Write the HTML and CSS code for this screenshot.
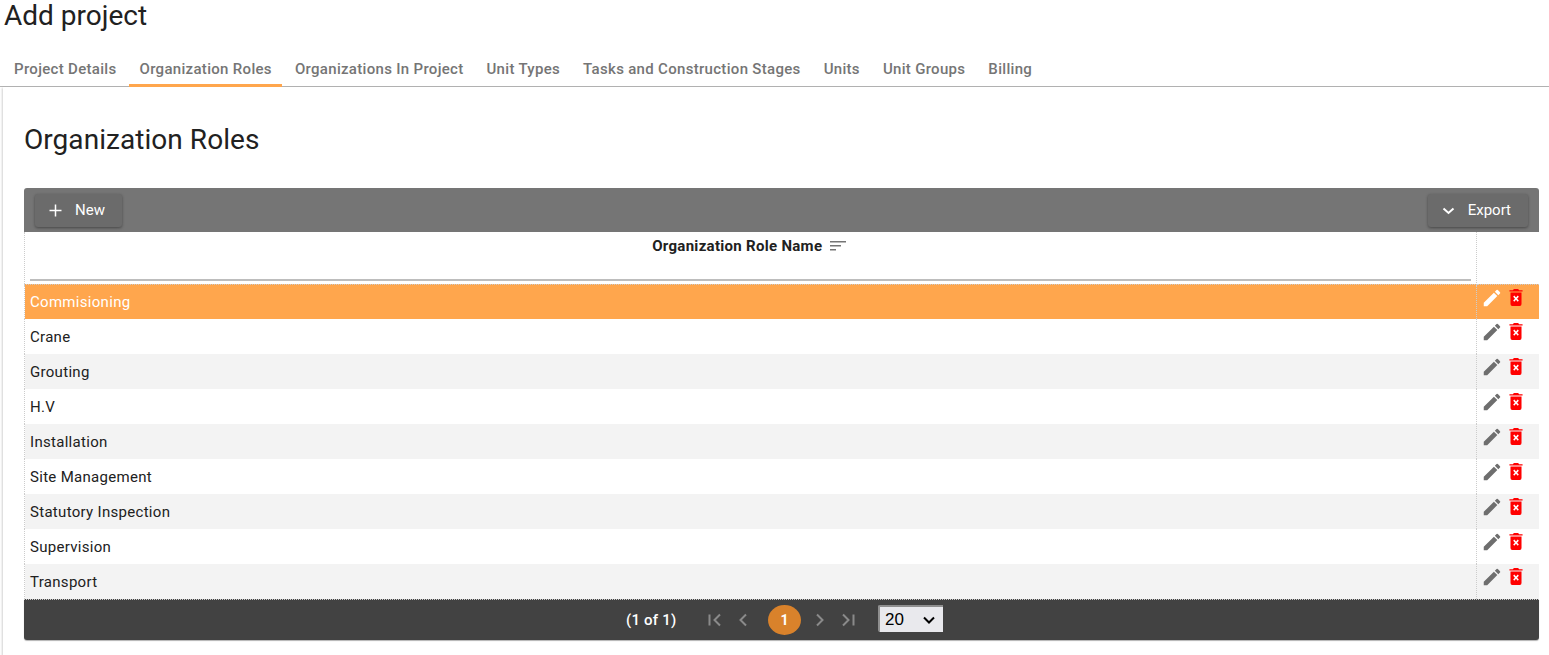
FILE: index.html
```html
<!DOCTYPE html>
<html lang="en">
<head>
<meta charset="utf-8">
<title>Add project</title>
<link rel="stylesheet" href="styles.css">
</head>
<body>
<svg class="sprite" width="0" height="0" aria-hidden="true">
  <symbol id="pencil" viewBox="0 0 24 24"><path d="M3 17.25V21h3.75L17.81 9.94l-3.75-3.75L3 17.25zM20.71 7.04a1 1 0 0 0 0-1.41l-2.34-2.34a1 1 0 0 0-1.41 0l-1.83 1.83 3.75 3.75 1.83-1.83z"/></symbol>
  <symbol id="trash" viewBox="0 0 16 18" preserveAspectRatio="none"><path fill="#f00" d="M5.500 0h5l1 1.200H15.500v1.500H.5V1.200h4zM1.700 3.600h12.600V16a2 2 0 0 1-2 2H3.700a2 2 0 0 1-2-2z"/><path class="x" d="M4.800 8.200l1.200-1.200 2 2 2-2 1.200 1.200-2 2 2 2-1.200 1.200-2-2-2 2-1.200-1.200 2-2z"/></symbol>
</svg>
<h1 class="page-title">Add project</h1>
<nav class="tabs">
  <a class="tab">Project Details</a>
  <a class="tab active">Organization Roles</a>
  <a class="tab">Organizations In Project</a>
  <a class="tab">Unit Types</a>
  <a class="tab">Tasks and Construction Stages</a>
  <a class="tab">Units</a>
  <a class="tab">Unit Groups</a>
  <a class="tab">Billing</a>
</nav>
<main class="panel">
  <h2 class="section-title">Organization Roles</h2>
  <section class="grid">
    <div class="toolbar">
      <button class="btn"><svg class="btn-icon" viewBox="0 0 14 14"><path d="M6.500 .5v12M.5 6.500h12"/></svg>New</button>
      <button class="btn"><svg class="btn-icon chev" viewBox="0 0 14 14"><path d="M1.500 4.500l5 4.500 5-4.500"/></svg>Export</button>
    </div>
    <table class="roles">
      <thead>
        <tr>
          <th class="name-head">
            <div class="head-label"><span>Organization Role Name</span><svg class="sort" viewBox="0 0 16 10"><path d="M0 .75h16M0 4.750h11M0 8.750h6"/></svg></div>
            <div class="filter"></div>
          </th>
          <th class="act-head"></th>
        </tr>
      </thead>
      <tbody>
        <tr class="selected"><td class="name">Commisioning</td><td class="acts"><svg class="pencil"><use href="#pencil"/></svg><svg class="trash"><use href="#trash"/></svg></td></tr>
        <tr><td class="name">Crane</td><td class="acts"><svg class="pencil"><use href="#pencil"/></svg><svg class="trash"><use href="#trash"/></svg></td></tr>
        <tr class="odd"><td class="name">Grouting</td><td class="acts"><svg class="pencil"><use href="#pencil"/></svg><svg class="trash"><use href="#trash"/></svg></td></tr>
        <tr><td class="name">H.V</td><td class="acts"><svg class="pencil"><use href="#pencil"/></svg><svg class="trash"><use href="#trash"/></svg></td></tr>
        <tr class="odd"><td class="name">Installation</td><td class="acts"><svg class="pencil"><use href="#pencil"/></svg><svg class="trash"><use href="#trash"/></svg></td></tr>
        <tr><td class="name">Site Management</td><td class="acts"><svg class="pencil"><use href="#pencil"/></svg><svg class="trash"><use href="#trash"/></svg></td></tr>
        <tr class="odd"><td class="name">Statutory Inspection</td><td class="acts"><svg class="pencil"><use href="#pencil"/></svg><svg class="trash"><use href="#trash"/></svg></td></tr>
        <tr><td class="name">Supervision</td><td class="acts"><svg class="pencil"><use href="#pencil"/></svg><svg class="trash"><use href="#trash"/></svg></td></tr>
        <tr class="odd"><td class="name">Transport</td><td class="acts"><svg class="pencil"><use href="#pencil"/></svg><svg class="trash"><use href="#trash"/></svg></td></tr>
      </tbody>
    </table>
    <div class="pager">
      <span class="count">(1 of 1)</span>
      <svg class="pg first" viewBox="0 0 16 16"><path d="M2.500 2.500v11M13 2.500L7.500 8l5.500 5.500"/></svg>
      <svg class="pg prev" viewBox="0 0 16 16"><path d="M11 2.500L5.500 8l5.500 5.500"/></svg>
      <span class="page-num">1</span>
      <svg class="pg next" viewBox="0 0 16 16"><path d="M5 2.500L10.500 8 5 13.500"/></svg>
      <svg class="pg last" viewBox="0 0 16 16"><path d="M3 2.500L8.500 8 3 13.500M13.500 2.500v11"/></svg>
      <div class="size-wrap">
        <select class="size"><option>20</option><option>50</option></select>
        <svg class="size-chev" viewBox="0 0 12 8"><path d="M1 1.500l5 5 5-5"/></svg>
      </div>
    </div>
  </section>
</main>
</body>
</html>
```
FILE: styles.css
```css
* { box-sizing: border-box; }
html, body { margin: 0; height: 655px; overflow: hidden; }
body { font-family: Roboto, "Liberation Sans", sans-serif; color: #212121; background: #fff; }
.sprite { position: absolute; }

.page-title { margin: 0; padding: 0 0 0 4px; height: 52px; font-size: 28px; font-weight: 400; line-height: 31px; }

.tabs { display: flex; height: 35px; padding-left: 4px; border-bottom: 1px solid #b4b4b4; }
.tab { padding: 0 10px; margin-right: 3px; height: 35px; line-height: 35px; font-size: 15px; font-weight: 500; color: #757575; letter-spacing: .31px; white-space: nowrap; }
.tab.active { border-bottom: 3px solid #ffa64d; }

.panel { margin: 0 0 0 3px; padding: 0 10px 0 21px; box-shadow: -1px 1px 2px rgba(0,0,0,.18); height: 568px; }
.section-title { margin: 0; padding-top: 36px; height: 101px; font-size: 28px; font-weight: 400; line-height: 33px; letter-spacing: .05px; }

.grid { width: 1515px; }

.toolbar { display: flex; justify-content: space-between; align-items: flex-start; height: 44px; padding: 6px 11px; background: #757575; border-radius: 3px 3px 0 0; }
.btn { display: flex; align-items: center; height: 33px; padding: 0 17px 0 14px; border: 0; border-radius: 3px; background: #6b6b6b; color: #fff; font: 400 15px/31px Roboto, sans-serif; box-shadow: 0 1px 3px rgba(0,0,0,.4); }
.btn-icon { width: 14px; height: 14px; margin-right: 12px; fill: none; stroke: #fff; stroke-width: 1.500; }
.chev { stroke-width: 2; }

.roles { width: 100%; border-collapse: collapse; table-layout: fixed; font-size: 15px; letter-spacing: .3px; border-left: 1px dotted #ccc; }
.name-head { height: 52px; padding: 0 5px; vertical-align: top; border-right: 1px dotted #ccc; border-bottom: 1px dotted #ccc; font-weight: 700; }
.act-head { width: 63px; border-bottom: 1px dotted #ccc; }
.head-label { display: flex; justify-content: center; align-items: center; height: 27px; padding-right: 2px; color: #212121; }
.sort { width: 16px; height: 10px; margin-left: 8px; flex: none; fill: none; stroke: #757575; stroke-width: 1.500; }
.filter { margin-top: 20px; height: 2px; background: #bdbdbd; }

.roles tbody tr { height: 35px; }
.name { padding: 0 5px; border-right: 1px dotted #ccc; }
.acts { padding: 0 0 0 4px; vertical-align: top; white-space: nowrap; border-right: 0; }
.pencil, .trash { display: inline-block; vertical-align: top; }
.pencil { width: 22px; height: 22px; margin-top: 2px; fill: #6e6e6e; }
.trash { width: 14px; height: 17px; margin: 4px 0 0 6px; }
.x { fill: #fff; }
.odd { background: #f3f3f3; }
.selected { background: #ffa64d; color: #fff; }
.selected .pencil { fill: #fff; }
.selected .x { fill: #ffa64d; }

.pager { display: flex; align-items: center; height: 41px; padding-left: 602px; background: #424242; border-top: 1px dotted #ccc; border-radius: 0 0 3px 3px; box-shadow: 0 1px 1px rgba(0,0,0,.3); }
.count { width: 51px; color: #fff; font-size: 15px; font-weight: 500; letter-spacing: .2px; white-space: nowrap; }
.pg { width: 16px; height: 16px; fill: none; stroke: #8a8a8a; stroke-width: 2; }
.first { margin-left: 30px; }
.prev { margin-left: 12px; }
.page-num { width: 33px; height: 30px; margin-left: 17px; border-radius: 50%; background: #d9822b; color: #fff; font-size: 14px; font-weight: 700; line-height: 30px; text-align: center; }
.next { margin-left: 11px; }
.last { margin-left: 12px; }
.size-wrap { position: relative; width: 65px; height: 27px; margin: 0 0 3px 22px; }
.size { display: block; width: 100%; height: 100%; padding: 0 0 0 5px; appearance: none; font: 400 17px "Liberation Sans", sans-serif; color: #000; background: #e9e9ed; border: 0; border-top: 2px solid #8f8f8f; border-left: 2px solid #8f8f8f; border-radius: 2px 0 0 2px; }
.size-chev { position: absolute; right: 8px; top: 11px; width: 12px; height: 8px; fill: none; stroke: #000; stroke-width: 2; pointer-events: none; }
```
